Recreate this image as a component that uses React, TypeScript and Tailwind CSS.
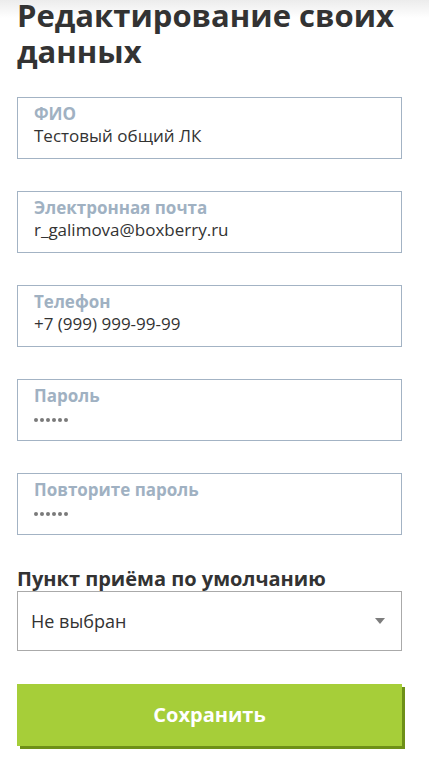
const fields = [
  { label: "ФИО", value: "Тестовый общий ЛК" },
  { label: "Электронная почта", value: "r_galimova@boxberry.ru" },
  { label: "Телефон", value: "+7 (999) 999-99-99" },
  { label: "Пароль", value: "", secret: true },
  { label: "Повторите пароль", value: "", secret: true },
];

export default function App() {
  return (
    <div
      className="min-h-[757px] bg-[linear-gradient(to_bottom,#ececec_0px,#ffffff_18px)] px-[17px] overflow-hidden"
      style={{ fontFamily: '"Open Sans", "Noto Sans", sans-serif' }}
    >
      <h1 className="-mt-[3px] text-[31px] leading-[36px] font-bold text-[#333333]">
        Редактирование своих данных
      </h1>

      <div className="mt-[28px] w-[385px] flex flex-col gap-[32px]">
        {fields.map((f) => (
          <div
            key={f.label}
            className="h-[62px] border border-[#a3b3c4] bg-white pl-[16px] pt-[6px]"
          >
            <div className="text-[17px] leading-[20px] font-bold text-[#a0b1c2]">
              {f.label}
            </div>
            {f.secret ? (
              <div className="mt-[1px] h-[22px] flex items-center gap-[2px] pt-[4px]">
                {[0, 1, 2, 3, 4, 5].map((i) => (
                  <span key={i} className="w-[4px] h-[4px] rounded-full bg-[#7a7a7a]" />
                ))}
              </div>
            ) : (
              <div className="mt-[1px] text-[17px] leading-[22px] text-[#333333]">
                {f.value}
              </div>
            )}
          </div>
        ))}
      </div>

      <div className="mt-[32px] w-[385px]">
        <div className="text-[20px] leading-[24px] font-bold text-[#333333]">
          Пункт приёма по умолчанию
        </div>
        <div className="h-[60px] border border-[#aaaaaa] bg-white flex items-center justify-between pl-[13px] pr-[16px]">
          <span className="text-[18px] leading-[24px] text-[#333333]">Не выбран</span>
          <svg width="10" height="6" viewBox="0 0 10 6">
            <path d="M0 0h10L5 6z" fill="#7d7d7d" />
          </svg>
        </div>
      </div>

      <button className="mt-[33px] w-[385px] h-[62px] bg-[#a6ce39] shadow-[3px_3px_0_#6e9018] text-white text-[20px] font-bold">
        Сохранить
      </button>
    </div>
  );
}
